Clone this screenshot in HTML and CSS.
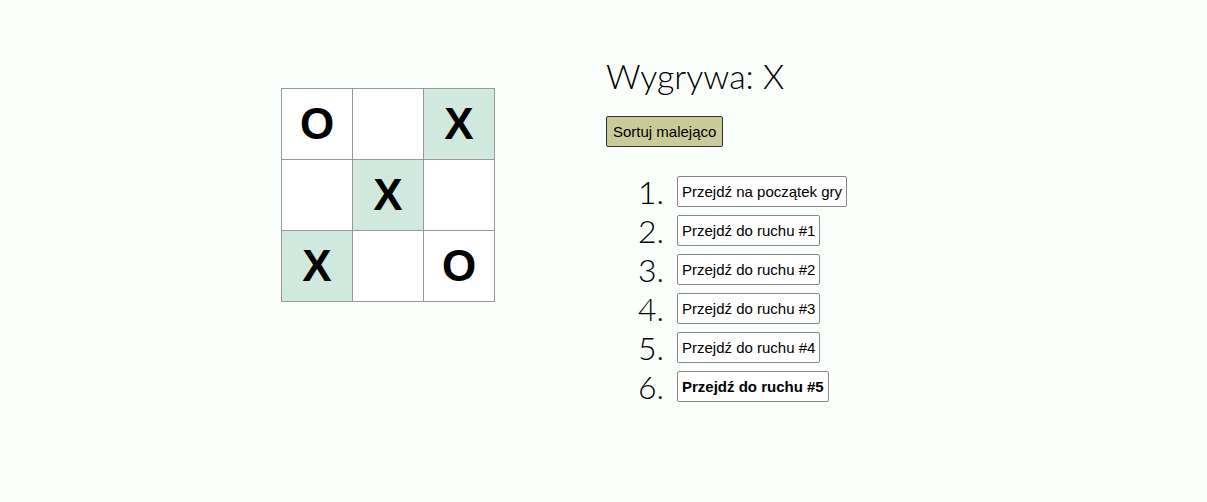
FILE: index.html
```html
<!DOCTYPE html>
<html lang="pl">
<head>
<meta charset="utf-8">
<title>Kółko i krzyżyk</title>
<link rel="stylesheet" href="styles.css">
</head>
<body>
<div class="game">
  <div class="board">
    <div class="row">
      <button class="square">O</button>
      <button class="square"></button>
      <button class="square win">X</button>
    </div>
    <div class="row">
      <button class="square"></button>
      <button class="square win">X</button>
      <button class="square"></button>
    </div>
    <div class="row">
      <button class="square win">X</button>
      <button class="square"></button>
      <button class="square">O</button>
    </div>
  </div>
  <div class="info">
    <div class="status">Wygrywa: X</div>
    <button class="sort">Sortuj malejąco</button>
    <ol class="moves">
      <li class="move"><button class="jump">Przejdź na początek gry</button></li>
      <li class="move"><button class="jump">Przejdź do ruchu #1</button></li>
      <li class="move"><button class="jump">Przejdź do ruchu #2</button></li>
      <li class="move"><button class="jump">Przejdź do ruchu #3</button></li>
      <li class="move"><button class="jump">Przejdź do ruchu #4</button></li>
      <li class="move"><button class="jump current">Przejdź do ruchu #5</button></li>
    </ol>
  </div>
</div>
</body>
</html>
```

FILE: styles.css
```css
html, body {
  margin: 0;
  padding: 0;
}
body {
  background: #fbfffb;
  font-family: "Lato", "DejaVu Sans", sans-serif;
  font-weight: 300;
  color: #000;
  height: 502px;
}
.game {
  display: flex;
  padding-left: 281px;
}
.board {
  margin-top: 88px;
  display: flex;
  flex-direction: column;
}
.row {
  display: flex;
}
.row + .row {
  margin-top: -1px;
}
.square {
  width: 72px;
  height: 72px;
  margin: 0 -1px 0 0;
  padding: 0;
  border: 1px solid #999;
  background: #fff;
  font-family: "Liberation Sans", Arial, sans-serif;
  font-weight: bold;
  font-size: 44px;
  line-height: 70px;
  color: #000;
  text-align: center;
}
.square.win {
  background: #cfe9df;
}
.info {
  margin-left: 112px;
  padding-top: 54px;
  display: flex;
  flex-direction: column;
  align-items: flex-start;
}
.status {
  font-size: 34px;
  line-height: 44px;
}
.sort {
  margin-top: 18px;
  font-family: "Liberation Sans", Arial, sans-serif;
  font-size: 15px;
  height: 31px;
  padding: 0 6px;
  background: #cbcb99;
  border: 1px solid #333;
  border-radius: 2px;
  color: #000;
}
.moves {
  list-style: none;
  margin: 25px 0 0 0;
  padding: 0;
  counter-reset: move;
}
.move {
  counter-increment: move;
  display: flex;
  align-items: center;
  height: 39px;
}
.move::before {
  content: counter(move) ".";
  width: 58px;
  text-align: right;
  margin-right: 13px;
  font-size: 32px;
  font-weight: 300;
  line-height: 39px;
}
.jump {
  font-family: "Liberation Sans", Arial, sans-serif;
  font-size: 15px;
  height: 31px;
  padding: 0 4px;
  background: #fff;
  border: 1px solid #888;
  border-radius: 2px;
  color: #000;
}
.jump.current {
  font-weight: bold;
}
```
